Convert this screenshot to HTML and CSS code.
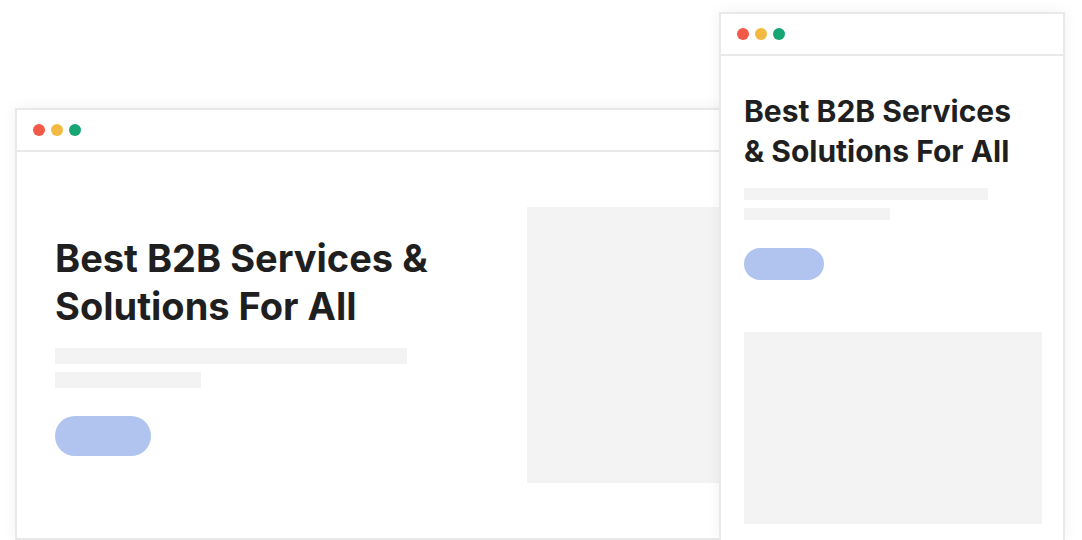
FILE: index.html
```html
<!DOCTYPE html>
<html lang="en">
<head>
<meta charset="utf-8">
<title>B2B Mockup</title>
<link rel="stylesheet" href="styles.css">
</head>
<body>
<div class="stage">
  <div class="window window-desktop">
    <div class="titlebar">
      <span class="dot dot-red"></span>
      <span class="dot dot-yellow"></span>
      <span class="dot dot-green"></span>
    </div>
    <div class="desktop-body">
      <div class="hero-text">
        <h1 class="hero-title hero-title-lg">Best B2B Services &amp;<br>Solutions For All</h1>
        <div class="bar bar-long-lg"></div>
        <div class="bar bar-short-lg"></div>
        <div class="pill pill-lg"></div>
      </div>
      <div class="placeholder placeholder-lg"></div>
    </div>
  </div>

  <div class="window window-mobile">
    <div class="titlebar">
      <span class="dot dot-red"></span>
      <span class="dot dot-yellow"></span>
      <span class="dot dot-green"></span>
    </div>
    <div class="mobile-body">
      <h1 class="hero-title hero-title-sm">Best B2B Services<br>&amp; Solutions For All</h1>
      <div class="bar bar-long-sm"></div>
      <div class="bar bar-short-sm"></div>
      <div class="pill pill-sm"></div>
      <div class="placeholder placeholder-sm"></div>
    </div>
  </div>
</div>
</body>
</html>
```

FILE: styles.css
```css
* { box-sizing: border-box; }

html, body {
  margin: 0;
  padding: 0;
  background: #ffffff;
}

body {
  width: 1082px;
  height: 540px;
  overflow: hidden;
  font-family: Inter, "Noto Sans", sans-serif;
}

.stage {
  position: relative;
  width: 1082px;
  height: 540px;
  overflow: hidden;
}

.window {
  position: absolute;
  background: #ffffff;
  border: 2px solid #e9e9e9;
  box-shadow: 0 0 14px rgba(0, 0, 0, 0.06);
  display: flex;
  flex-direction: column;
}

.window-desktop {
  left: 15px;
  top: 108px;
  width: 1010px;
  height: 432px;
}

.window-mobile {
  left: 719px;
  top: 12px;
  width: 346px;
  height: 528px;
  border-bottom: none;
}

.titlebar {
  height: 42px;
  flex: 0 0 42px;
  border-bottom: 2px solid #e9e9e9;
  display: flex;
  align-items: center;
  gap: 6px;
  padding-left: 16px;
}

.dot {
  width: 12px;
  height: 12px;
  border-radius: 50%;
  display: block;
}
.dot-red { background: #f25a45; }
.dot-yellow { background: #f4b942; }
.dot-green { background: #17a574; }

.desktop-body {
  flex: 1;
  display: flex;
  align-items: center;
  padding: 0 0 0 38px;
}

.hero-text {
  width: 472px;
  display: flex;
  flex-direction: column;
  align-items: flex-start;
}

.hero-title {
  margin: 0;
  color: #1f1f1f;
  font-weight: 700;
  letter-spacing: 0;
}

.hero-title-lg {
  font-size: 38px;
  line-height: 48px;
}

.hero-title-sm {
  font-size: 30px;
  line-height: 40px;
}

.bar {
  background: #f3f3f3;
}

.bar-long-lg { width: 352px; height: 16px; margin-top: 18px; }
.bar-short-lg { width: 146px; height: 16px; margin-top: 8px; }

.pill {
  background: #b0c4ef;
}

.pill-lg {
  width: 96px;
  height: 40px;
  border-radius: 20px;
  margin-top: 28px;
}

.placeholder {
  background: #f3f3f3;
}

.placeholder-lg {
  width: 440px;
  height: 276px;
}

.mobile-body {
  padding: 35px 21px 0 23px;
  display: flex;
  flex-direction: column;
  align-items: flex-start;
}

.bar-long-sm { width: 244px; height: 12px; margin-top: 17px; }
.bar-short-sm { width: 146px; height: 12px; margin-top: 8px; }

.pill-sm {
  width: 80px;
  height: 32px;
  border-radius: 16px;
  margin-top: 28px;
}

.placeholder-sm {
  width: 298px;
  height: 192px;
  margin-top: 52px;
}
```
